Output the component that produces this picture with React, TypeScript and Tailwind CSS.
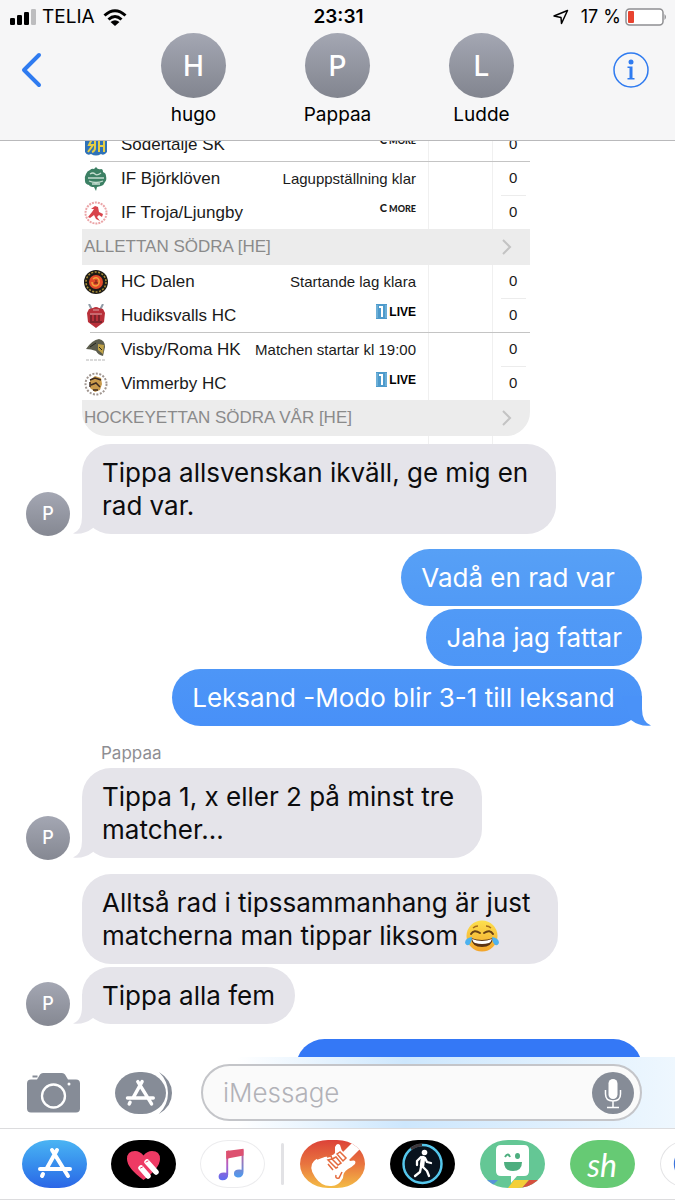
import type { ReactNode } from 'react';
import { clsx } from 'clsx';

interface Contact {
  initial: string;
  name: string;
}

interface Team {
  name: string;
  crest: ReactNode;
  status?: string;
  channel?: 'cmore' | 'live';
}

const contacts: Contact[] = [
  { initial: 'H', name: 'hugo' },
  { initial: 'P', name: 'Pappaa' },
  { initial: 'L', name: 'Ludde' },
];

const sodertalje: Team = {
  name: 'Södertälje SK',
  channel: 'cmore',
  crest: (
    <svg viewBox="0 0 24 24" className="size-6">
      <path d="M1 4h22v15q-3 4-6 2-5 3-10 0-4 2-6-2z" fill="#2f72b8" />
      <path d="M3 6h5l-3 6h4l-5 7M11 6v9q0 3-3 4M15 6v13M20 6v13M15 13h5" stroke="#e5cf45" strokeWidth="2" fill="none" />
    </svg>
  ),
};

const bjorkloven: Team = {
  name: 'IF Björklöven',
  status: 'Laguppställning klar',
  crest: (
    <svg viewBox="0 0 24 24" className="size-6">
      <path d="M12 0q2 3 5 2 2 0 2 3 3 1 3 4 1 4-1 6-1 3-4 4l-4 1-1 4-2-4q-4 0-5-2-4-1-4-4-1-4 1-7 1-3 4-4 2-2 4-1z" fill="#3c8064" />
      <path d="M6 7q3-2 5 0t6-1M4 11h16M5 14q7 3 14 0M8 17h8" stroke="#c4dccf" strokeWidth="1.3" fill="none" />
    </svg>
  ),
};

const troja: Team = {
  name: 'IF Troja/Ljungby',
  channel: 'cmore',
  crest: (
    <svg viewBox="0 0 24 24" className="size-6">
      <circle cx="12" cy="12" r="10.5" fill="#fff" stroke="#eba5a8" strokeWidth="2" strokeDasharray="2 1" />
      <path d="M7 8l4-3 3 1 1 5 4 2-1 3-3-2-2 2 3 4-4-2-2-4-4 3-2-1 4-5 2-3z" fill="#d8434b" />
    </svg>
  ),
};

const dalen: Team = {
  name: 'HC Dalen',
  status: 'Startande lag klara',
  crest: (
    <svg viewBox="0 0 24 24" className="size-6">
      <circle cx="12" cy="12" r="12" fill="#1d1a16" />
      <circle cx="12" cy="12" r="10" fill="none" stroke="#a98e35" strokeWidth="1.5" strokeDasharray="2 1.5" />
      <circle cx="12" cy="12" r="7" fill="#e24a2a" />
      <path d="M9 9q4-3 6 1 1 5-3 6-4 0-4-4" stroke="#f2a33c" strokeWidth="1.5" fill="none" />
      <path d="M10 13h4M12 10v3" stroke="#6d2214" />
    </svg>
  ),
};

const hudiksvall: Team = {
  name: 'Hudiksvalls HC',
  channel: 'live',
  crest: (
    <svg viewBox="0 0 24 24" className="size-6">
      <path d="M5 0l3 6M19 0l-3 6" stroke="#8f9aa5" strokeWidth="2" />
      <path d="M5 5l4-1q3-2 6 0l4 1 2 4-1 9-8 6-8-6-1-9z" fill="#b9303a" />
      <path d="M7 11v6M11 11v6M15 11v6M6 18h12" stroke="#6b2028" strokeWidth="1.5" />
      <path d="M9 6h6M6 10h12" stroke="#d9a4a6" />
    </svg>
  ),
};

const visby: Team = {
  name: 'Visby/Roma HK',
  status: 'Matchen startar kl 19:00',
  crest: (
    <svg viewBox="0 0 24 24" className="size-6">
      <path d="M2 11Q8 2 15 1q6 1 6 8l-2 9q-5-1-7-5-5-2-10-2z" fill="#5c5d4d" />
      <path d="M14 6l6 1-1 9-5-4z" fill="#c0a248" />
      <path d="M6 9l6-4M15 9l3 3" stroke="#26271f" />
      <path d="M2 22h20" stroke="#b5b5b5" strokeDasharray="3 1" />
    </svg>
  ),
};

const vimmerby: Team = {
  name: 'Vimmerby HC',
  channel: 'live',
  crest: (
    <svg viewBox="0 0 24 24" className="size-6">
      <circle cx="12" cy="12" r="10.5" fill="#fff" stroke="#a09690" strokeWidth="2" strokeDasharray="2 1.5" />
      <path d="M6 8l5-4 6 2 1 6-2 6-5 2-5-4z" fill="#c99a4b" />
      <path d="M6 8l5-2 6 2M7 13l5-2 4 4M9 18h5M6 10v5" stroke="#3d2a20" strokeWidth="1.5" fill="none" />
    </svg>
  ),
};

function Channel({ kind }: { kind: 'cmore' | 'live' }) {
  if (kind === 'cmore') {
    return (
      <span className="pb-2 font-['Lato',sans-serif] text-[9px] leading-4 font-black">
        <span className="text-[11px]">C</span> MORE
      </span>
    );
  }
  return (
    <span className="flex items-center gap-0.5 pb-2 text-xs leading-4 font-bold text-black">
      <svg viewBox="0 0 11 15" className="h-[15px] w-[11px]">
        <rect width="11" height="15" fill="#4d9acb" />
        <path d="M3 2h4v11H5V4H3z" fill="#fff" />
        <path d="M1 1v13M10 1v13" stroke="#8cc3e3" />
      </svg>
      LIVE
    </span>
  );
}

function TeamRow({ team, home }: { team: Team; home?: boolean }) {
  return (
    <tr className={home ? 'h-[34px]' : 'h-[33px]'}>
      <td className="pl-0.5">{team.crest}</td>
      <td>
        <div className="flex items-center justify-between pr-3">
          <span className="text-[17px] leading-6">{team.name}</span>
          {team.status && <span className="text-[15px] leading-6">{team.status}</span>}
          {team.channel && <Channel kind={team.channel} />}
        </div>
      </td>
      <td className="border-x border-[#f0f0f0]" />
      <td className="pr-1 pl-2">
        <div className={clsx('flex h-[33px] items-center border-b pl-2 text-[15px]', home ? 'border-[#ececec]' : 'border-transparent')}>
          0
        </div>
      </td>
    </tr>
  );
}

function Rule() {
  return (
    <tr>
      <td colSpan={4}>
        <div className="ml-2 h-px bg-[#c4c4c4]" />
      </td>
    </tr>
  );
}

function LeagueRow({ title, last }: { title: string; last?: boolean }) {
  return (
    <tr>
      <th colSpan={4} className={clsx('h-9 bg-[#ececec] font-normal', last && 'rounded-b-3xl')}>
        <div className="flex items-center justify-between pr-[18px] pl-0.5 text-[17px] leading-6 text-[#8a8a8a]">
          {title}
          <svg viewBox="0 0 10 16" className="h-4 w-2.5" fill="none" stroke="#c3c3c3" strokeWidth="2">
            <path d="M1 1l7 7-7 7" />
          </svg>
        </div>
      </th>
    </tr>
  );
}

function ScoreTable() {
  return (
    <table className="-mt-[13px] ml-[82px] w-[448px] table-fixed border-separate border-spacing-0 text-left font-['Liberation_Sans',Arial,sans-serif] text-[#1a1a1a]">
      <colgroup>
        <col className="w-[39px]" />
        <col />
        <col className="w-[65px]" />
        <col className="w-[37px]" />
      </colgroup>
      <tbody>
        <TeamRow team={sodertalje} />
        <Rule />
        <TeamRow team={bjorkloven} home />
        <TeamRow team={troja} />
        <LeagueRow title="ALLETTAN SÖDRA [HE]" />
        <TeamRow team={dalen} home />
        <TeamRow team={hudiksvall} />
        <Rule />
        <TeamRow team={visby} home />
        <TeamRow team={vimmerby} />
        <LeagueRow title="HOCKEYETTAN SÖDRA VÅR [HE]" last />
        <tr className="h-2">
          <td colSpan={2} />
          <td className="border-x border-[#f0f0f0]" />
          <td />
        </tr>
      </tbody>
    </table>
  );
}

function Incoming({ children, initial }: { children: ReactNode; initial?: string }) {
  return (
    <div className="flex items-end pl-[26px]">
      <div className="w-14 shrink-0">
        {initial && (
          <div className="-mb-0.5 flex size-11 items-center justify-center rounded-full bg-linear-to-b from-[#a4a7b3] to-[#858892] text-lg font-medium text-white">
            {initial}
          </div>
        )}
      </div>
      <div className="relative rounded-[29px] bg-[#e5e4ea] px-5 py-3 text-[26px] leading-[33px] text-[#0c0c0e]">
        {initial && (
          <svg viewBox="0 0 30 30" className="absolute bottom-0 -left-2.5 size-[30px]" fill="#e5e4ea">
            <path d="M10 0v13Q10 26 1 29.500 12 31 21 24L30 0z" />
          </svg>
        )}
        <p className="relative">{children}</p>
      </div>
    </div>
  );
}

function Outgoing({ children, className, tail }: { children: ReactNode; className: string; tail?: boolean }) {
  return (
    <div className="flex justify-end pr-[33px]">
      <div className={clsx('relative rounded-[29px] px-5 py-3 text-[26px] leading-[33px] text-white', className)}>
        {tail && (
          <svg viewBox="0 0 30 30" className="absolute -right-2.5 bottom-0 size-[30px]" fill="#4a92f8">
            <path d="M20 0v13Q20 26 29 29.500 18 31 9 24L0 0z" />
          </svg>
        )}
        <p className="relative">{children}</p>
      </div>
    </div>
  );
}

function JoyEmoji() {
  return (
    <svg viewBox="0 0 34 34" className="-my-1 inline size-[34px] align-[-4px]" role="img" aria-label="😂">
      <defs>
        <linearGradient id="joy" x2="0" y2="1">
          <stop offset="0" stopColor="#fde04d" />
          <stop offset="1" stopColor="#f3a52c" />
        </linearGradient>
      </defs>
      <circle cx="17" cy="17" r="15.5" fill="url(#joy)" />
      <path d="M6 15q3-5 9-1M19 14q6-4 9 1" stroke="#6a4216" strokeWidth="2" fill="none" strokeLinecap="round" />
      <path d="M8 9q2-2 5-2M21 7q3 0 5 2" stroke="#a36b1c" strokeWidth="1.3" fill="none" />
      <path d="M6 19q11 4 22 0-1 9-11 9T6 19z" fill="#5b3415" />
      <path d="M7 20q10 4 20 0-1 3-3 4-7 2-14 0-2-1-3-4z" fill="#fff" />
      <path d="M7 18q-7 1-7 6 2 4 5 1 2-3 2-7zM27 18q7 1 7 6-2 4-5 1-2-3-2-7z" fill="#4db2ef" />
    </svg>
  );
}

function StatusBar() {
  return (
    <div className="grid h-[34px] grid-cols-3 items-center pr-2 pl-2.5 text-[19px] leading-6 text-black">
      <div className="flex items-center gap-1.5">
        <svg viewBox="0 0 26 16" className="h-4 w-[26px]">
          <rect y="9" width="5" height="7" rx="1.3" />
          <rect x="7" y="6" width="5" height="10" rx="1.3" />
          <rect x="14" y="3" width="5" height="13" rx="1.3" />
          <rect x="21" width="5" height="16" rx="1.3" fill="#bdbdbf" />
        </svg>
        TELIA
        <svg viewBox="0 0 24 17" className="ml-0.5 h-[17px] w-6" fill="none" stroke="#000" strokeWidth="3">
          <path d="M1.500 6.500Q12-3 22.500 6.500M5.500 10.500Q12 4.500 18.500 10.500" />
          <path d="M12 17l-4.500-4Q12 9.500 16.500 13z" fill="#000" stroke="none" />
        </svg>
      </div>
      <div className="text-center font-semibold">23:31</div>
      <div className="flex items-center justify-end gap-1 text-lg">
        <svg viewBox="0 0 16 16" className="mr-2 size-4" fill="none" stroke="#000" strokeWidth="1.500" strokeLinejoin="round">
          <path d="M14.500 1.500L1 7l7 1.500.500 6z" />
        </svg>
        17 %
        <svg viewBox="0 0 42 18" className="h-[18px] w-[42px]">
          <rect x="1" y="1" width="37" height="16" rx="3.500" fill="#fff" stroke="#8f8f92" strokeWidth="1.500" />
          <rect x="3" y="3" width="6" height="12" rx="1" fill="#e8432f" />
          <path d="M39.500 6q3 3 0 6z" fill="#8f8f92" />
        </svg>
      </div>
    </div>
  );
}

function Header() {
  return (
    <header className="shrink-0 border-b border-[#b9b9bb] bg-[#f6f6f7]">
      <StatusBar />
      <div className="flex h-[106px] items-start justify-between">
        <button aria-label="Back" className="flex h-[72px] w-[120px] items-center pl-5">
          <svg viewBox="0 0 22 36" className="h-9 w-[22px]" fill="none" stroke="#2f7bf0" strokeWidth="4" strokeLinecap="round" strokeLinejoin="round">
            <path d="M19 3L4 18l15 15" />
          </svg>
        </button>
        <div className="-mt-px flex">
          {contacts.map((contact) => (
            <div key={contact.name} className="flex w-36 flex-col items-center gap-[5px]">
              <div className="flex size-[65px] items-center justify-center rounded-full bg-linear-to-b from-[#a4a7b3] to-[#82858f] text-[28px] font-medium text-white">
                {contact.initial}
              </div>
              <span className="text-[19px] leading-6 text-black">{contact.name}</span>
            </div>
          ))}
        </div>
        <button aria-label="Info" className="flex h-[72px] w-[120px] items-center justify-end pr-[26px]">
          <svg viewBox="0 0 36 36" className="size-9" fill="#2f7bf0">
            <circle cx="18" cy="18" r="17" fill="none" stroke="#2f7bf0" strokeWidth="1.500" />
            <circle cx="18" cy="10" r="2.500" />
            <path d="M14.500 14.500h5V26h2v1.500h-7V26h2v-10h-2z" />
          </svg>
        </button>
      </div>
    </header>
  );
}

function StoreGlyph() {
  return (
    <g stroke="#fff" strokeWidth="4" strokeLinecap="round" fill="none">
      <path d="M30 10l16 26M35 10L25 28M18 29h30M21 34l-1 2" />
    </g>
  );
}

function Composer() {
  return (
    <div className="flex h-[72px] items-center border-b border-[#dcdcde] bg-linear-to-r from-white from-35% via-[#cde7fd] via-60% to-[#eef7fe] pr-[33px] pl-[27px]">
      <button aria-label="Camera">
        <svg viewBox="0 0 53 40" className="h-10 w-[53px]" fill="#868c97">
          <path d="M4 6.500h6l3-5Q14 0 16 0h19q2 0 3 1.500l3 5h8q4 0 4 4v25q0 4-4 4H4q-4 0-4-4v-25q0-4 4-4z" />
          <path d="M5.500 3.500h5" stroke="#868c97" strokeWidth="2" />
          <circle cx="26.500" cy="23" r="11.500" fill="none" stroke="#fff" strokeWidth="2.300" />
          <circle cx="42" cy="11" r="1.500" fill="#fff" />
        </svg>
      </button>
      <button aria-label="Apps" className="ml-[35px]">
        <svg viewBox="0 0 58 42" className="h-[42px] w-[58px]">
          <path d="M44 0Q57 8 57 21T44 42q9-9 9-21T44 0z" fill="#868c97" />
          <rect width="51" height="42" rx="24" fill="#868c97" />
          <g transform="translate(-3 1) scale(.86)">
            <StoreGlyph />
          </g>
        </svg>
      </button>
      <div className="ml-7 flex h-[57px] min-w-0 flex-1 items-center rounded-full border-2 border-[#c4c5c9] bg-[#fafafa] pr-1.5 pl-5">
        <input
          aria-label="Message"
          placeholder="iMessage"
          className="min-w-0 flex-1 bg-transparent text-[26px] leading-8 font-light outline-none placeholder:text-[#b2b2b8]"
        />
        <button aria-label="Dictate" className="rounded-full bg-[#868c97]">
          <svg viewBox="0 0 42 42" className="size-[42px]" fill="none" stroke="#fff" strokeWidth="1.500">
            <rect x="16.500" y="7" width="9" height="20" rx="4.500" fill="#fff" stroke="none" />
            <path d="M13.500 18v4q0 7 7.500 7t7.500-7v-4M21 29v6M15 35.500h12" />
          </svg>
        </button>
      </div>
    </div>
  );
}

function AppButton({ label, className, children }: { label: string; className: string; children: ReactNode }) {
  return (
    <button aria-label={label} className={clsx('h-12 w-[65px] shrink-0 overflow-hidden rounded-[28px/24px]', className)}>
      <svg viewBox="0 0 65 48" className="size-full">
        {children}
      </svg>
    </button>
  );
}

function AppStrip() {
  return (
    <nav className="flex h-[71px] items-center gap-4 overflow-hidden border-b border-[#dcdcde] bg-white pl-[22px]">
      <div className="flex shrink-0 gap-6">
        <AppButton label="App Store" className="bg-linear-to-b from-[#4bb4f3] to-[#2c66e6]">
          <StoreGlyph />
        </AppButton>
        <AppButton label="Digital Touch" className="bg-black">
          <path d="M32.500 40Q16 28 16 19q0-8 8-8 5 0 8.500 4.500Q36 11 41 11q8 0 8 8 0 9-16.500 21z" fill="#ee3a64" />
          <path d="M36 22l9 10M30 28l7 8" stroke="#fff" strokeWidth="5.500" strokeLinecap="round" />
          <path d="M35 22l2-1M29.500 28l2-1" stroke="#ee3a64" strokeLinecap="round" />
        </AppButton>
        <AppButton label="Music" className="border border-[#ececee] bg-white">
          <defs>
            <linearGradient id="note" x2="0" y2="1">
              <stop offset="0" stopColor="#ea4f6b" />
              <stop offset=".5" stopColor="#b05fc8" />
              <stop offset="1" stopColor="#5a6cf2" />
            </linearGradient>
            <linearGradient id="stem" x2="0" y2="1">
              <stop offset="0" stopColor="#d95a8f" />
              <stop offset="1" stopColor="#4a9bf0" />
            </linearGradient>
          </defs>
          <path d="M26 10.500V33q-8-1-8 4 0 4 4 4 6 0 6-6V18h1v-8z" fill="url(#note)" />
          <path d="M42 14v16q-8-1-8 4 0 4 4 4 6 0 6-6V8z" fill="url(#stem)" />
          <path d="M26 10.500L44 8v7l-18 3.500z" fill="#dd5170" />
        </AppButton>
      </div>
      <div className="h-[42px] w-[3px] shrink-0 rounded-full bg-[#e2e2e5]" />
      <div className="flex shrink-0 gap-[25px]">
        <AppButton label="GarageBand" className="bg-linear-to-b from-[#dc4138] via-[#e8743f] to-[#f3bc45]">
          <path d="M54 1l8 6-14 14-8-6z" fill="#fff" />
          <path d="M35 7q2-5 5-2 1 5 4 8l6 8q7-2 5 3-3 3-7 5-5 3-5 9-5 9-13 8-9 0-15-9-7-10-1-16 4-4 10-4 9-1 11-4z" fill="#fff" />
          <g fill="none" stroke="#e46a3d" strokeWidth="1.500">
            <path d="M17 19l8-3M27 17l4-1 1 3-4 1 8 8 2-1M32 19l4-2 5 6-3 2zM37 14l3-2 6 6-3 3zM28 24l5 6M36 35q-1 4 3 3l3-6" />
          </g>
        </AppButton>
        <AppButton label="Activity" className="bg-black">
          <circle cx="32.500" cy="24" r="19" fill="#08131e" stroke="#55c7ec" strokeWidth="2.500" />
          <path d="M21 9q5-4 11-4" stroke="#40383b" strokeWidth="3" fill="none" />
          <circle cx="34.500" cy="12.500" r="2.800" fill="#fff" />
          <g stroke="#fff" strokeLinecap="round" strokeLinejoin="round" fill="none">
            <path d="M33 18l-1 8" strokeWidth="4.500" />
            <path d="M31 27l-1 5-5 4M33 27l4 4 2 5M31 17l-4 4v4M35 18l2 4 4 1" strokeWidth="2.300" />
          </g>
        </AppButton>
        <AppButton label="Bitmoji" className="bg-[#64c795]">
          <path d="M4 40h14l-8 8H0z" fill="#5794d8" />
          <path d="M34 40h15l-7 8H28z" fill="#f4cf37" />
          <path d="M49 40h12l-12 8h-7z" fill="#d6503e" />
          <path d="M21 5h23q5 0 5 5v21q0 5-5 5h-7l-6 7v-7H21q-5 0-5-5V10q0-5 5-5z" fill="#fff" />
          <path d="M24 22h18q0 9-9 9t-9-9z" fill="#4dae7f" />
          <path d="M25 17q3-5 5 0" stroke="#4dae7f" strokeWidth="2" fill="none" />
          <ellipse cx="37.500" cy="16" rx="2.500" ry="3" fill="#4dae7f" />
        </AppButton>
        <AppButton label="Shpock" className="bg-[#66ca74]">
          <text x="32" y="37" textAnchor="middle" fill="#fff" className="font-['Lato',sans-serif] text-[32px] italic">
            sh
          </text>
        </AppButton>
        <AppButton label="Google" className="border border-[#e4e4e6] bg-white">
          <circle cx="32" cy="24" r="19" fill="#3b74dd" />
        </AppButton>
      </div>
    </nav>
  );
}

export default function App() {
  return (
    <div className="flex h-screen flex-col overflow-hidden bg-white font-['Inter',sans-serif]">
      <Header />
      <main className="min-h-0 flex-1 overflow-hidden">
        <ScoreTable />
        <Incoming initial="P">
          Tippa allsvenskan ikväll, ge mig en&nbsp;
          <br />
          rad var.
        </Incoming>
        <div className="mt-[15px] flex flex-col gap-[3px]">
          <Outgoing className="bg-linear-to-b from-[#57a0f6] to-[#519af6]">Vadå en rad var&nbsp;</Outgoing>
          <Outgoing className="bg-linear-to-b from-[#519af6] to-[#4d96f7]">Jaha jag fattar</Outgoing>
          <Outgoing tail className="bg-linear-to-b from-[#4d96f7] to-[#4890f8]">
            Leksand -Modo blir 3-1 till leksand&nbsp;
          </Outgoing>
        </div>
        <p className="mt-[15px] mb-[3px] pl-[101px] text-[17px] leading-6 text-[#8e8e93]">Pappaa</p>
        <Incoming initial="P">
          Tippa 1, x eller 2 på minst tre&nbsp;
          <br />
          matcher...
        </Incoming>
        <div className="mt-4 mb-[15px] flex flex-col gap-[3px]">
          <Incoming>
            Alltså rad i tipssammanhang är just&nbsp;
            <br />
            matcherna man tippar liksom <JoyEmoji />
          </Incoming>
          <Incoming initial="P">Tippa alla fem</Incoming>
        </div>
        <Outgoing className="w-[346px] bg-[#3478f6]">&nbsp;</Outgoing>
      </main>
      <footer className="shrink-0">
        <Composer />
        <AppStrip />
      </footer>
    </div>
  );
}
